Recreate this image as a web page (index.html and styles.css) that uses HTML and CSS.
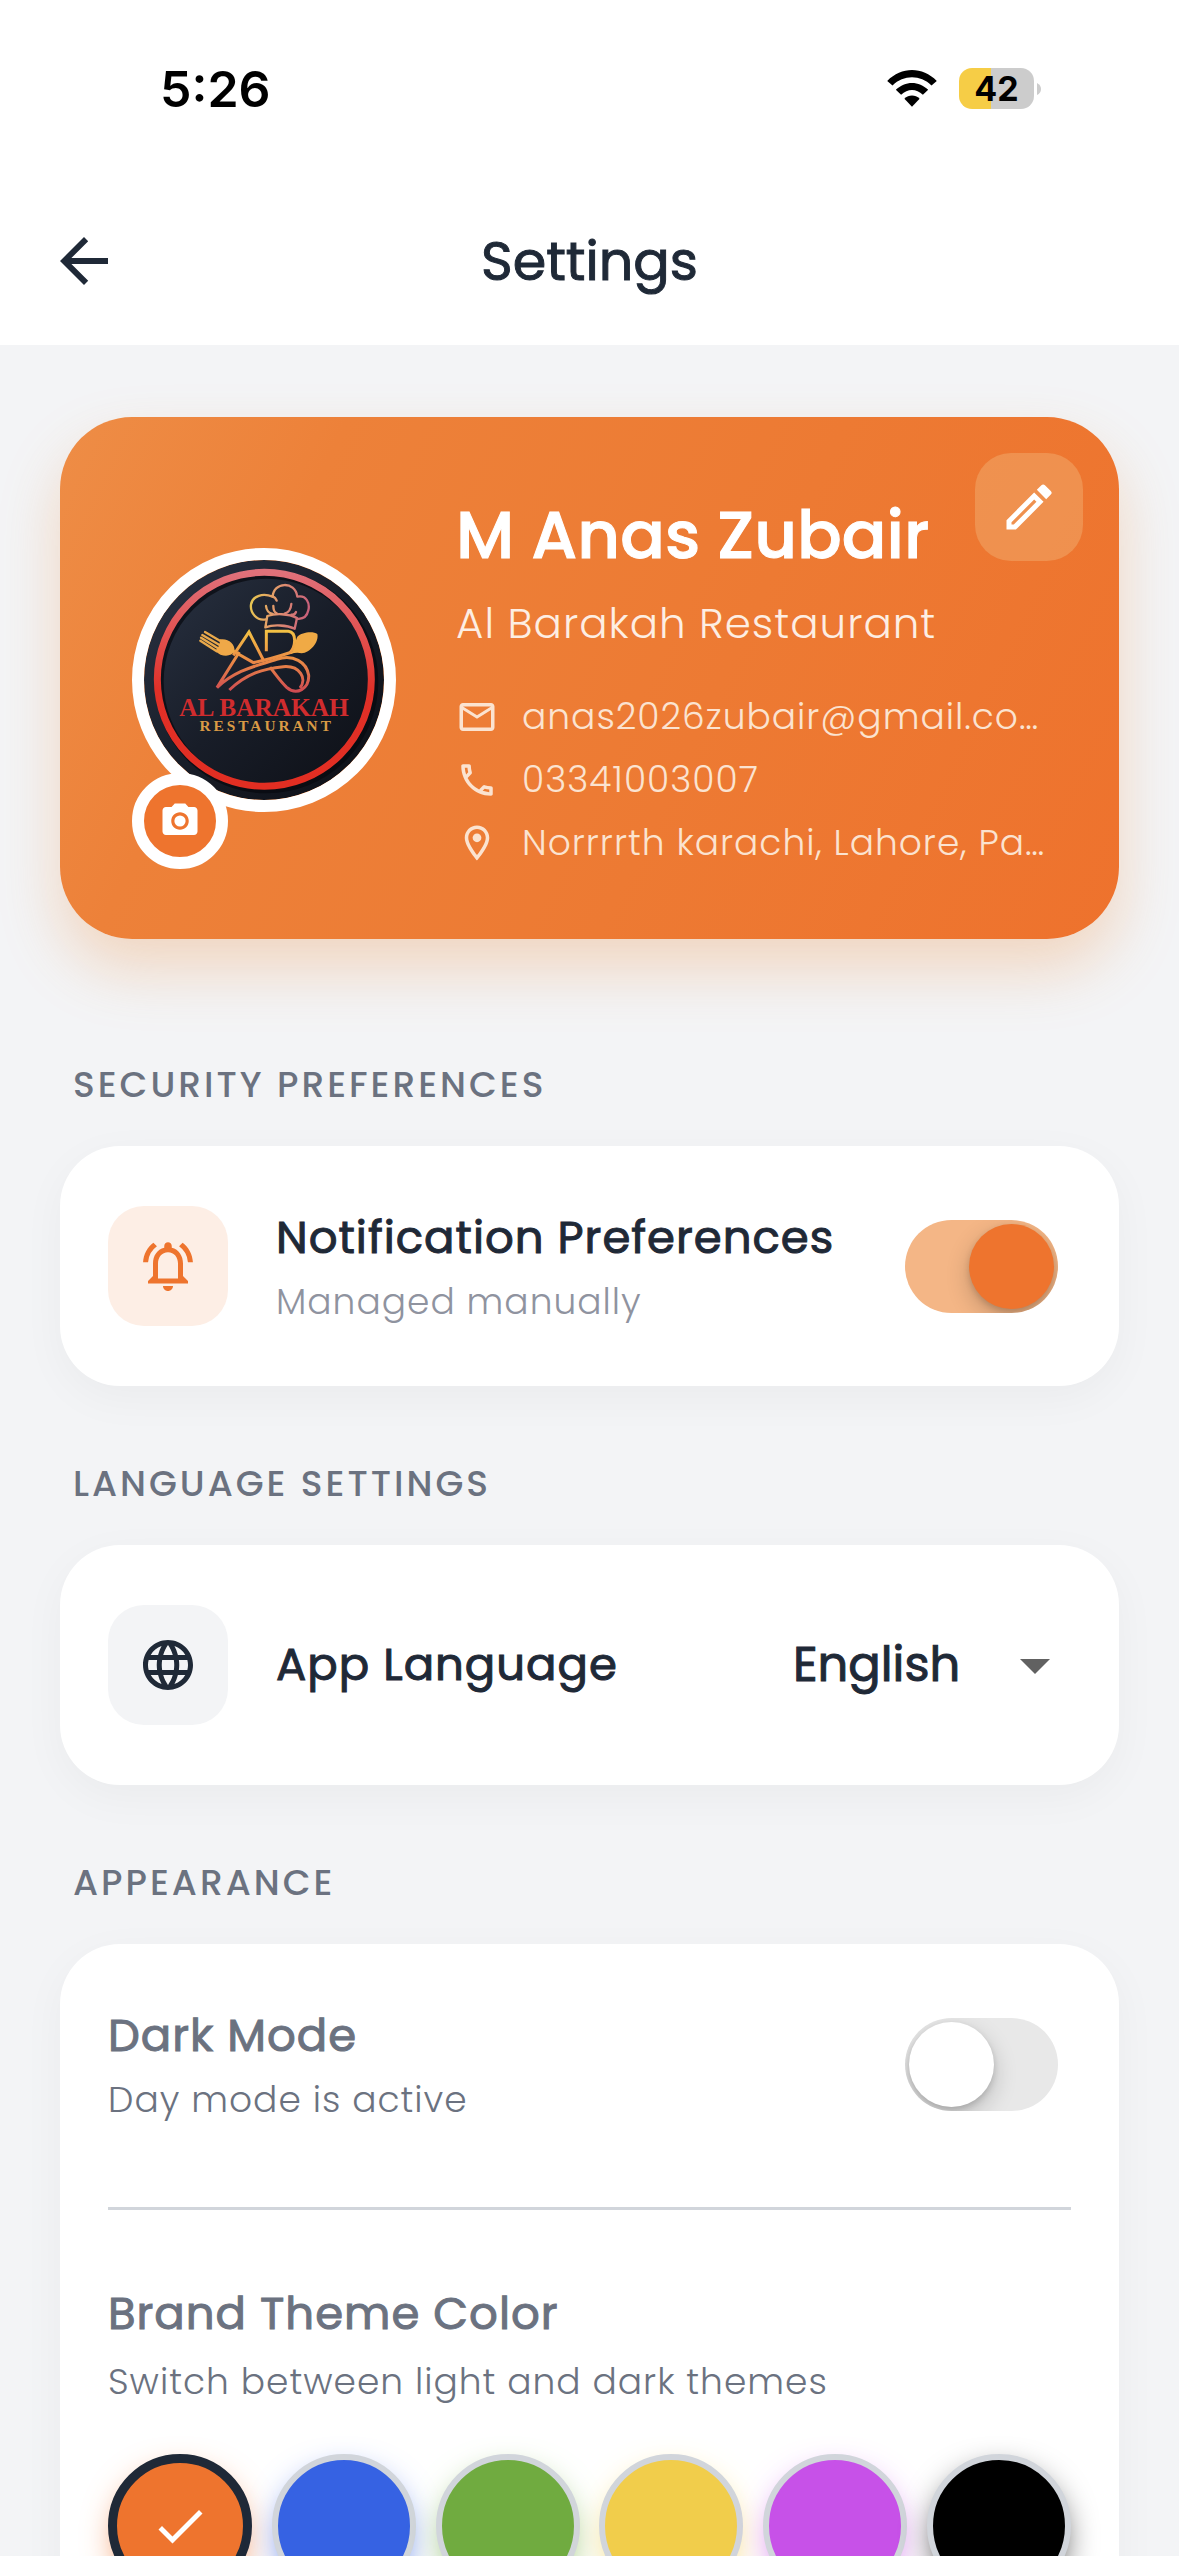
FILE: index.html
```html
<!DOCTYPE html>
<html lang="en">
<head>
<meta charset="utf-8">
<meta name="viewport" content="width=device-width, initial-scale=1">
<title>Settings</title>
<link rel="stylesheet" href="styles.css">
</head>
<body>
<div class="app">
  <div class="status-bar">
    <span class="clock">5:26</span>
    <div class="indicators">
      <svg class="wifi" viewBox="0 0 150 112" aria-hidden="true">
        <path d="M0 33C43-11 107-11 150 33L134 47C100 14 50 14 16 47Z"/>
        <path d="M26 60C54 32 96 32 124 60L108 75C88 56 62 56 42 75Z"/>
        <path d="M52 87C65 74 85 74 98 87L75 111Z"/>
      </svg>
      <div class="battery">
        <span class="battery-level">42</span>
        <svg class="battery-tip" viewBox="0 0 4 12" aria-hidden="true"><path d="M0 0Q4 2 4 6T0 12Z"/></svg>
      </div>
    </div>
  </div>

  <header class="top-bar">
    <button class="back" type="button" aria-label="Back">
      <svg viewBox="0 0 24 24"><path d="M20 11H7.8l5.600-5.600L12 4l-8 8 8 8 1.400-1.400L7.800 13H20z"/></svg>
    </button>
    <h1 class="title">Settings</h1>
  </header>

  <main class="content">
    <section class="profile">
      <div class="avatar">
        <svg class="logo" viewBox="72 84 720 720" role="img" aria-label="Al Barakah Restaurant logo">
          <defs>
            <linearGradient id="night" x1="0" y1="0" x2="1" y2="1">
              <stop offset="0" stop-color="#2b3445"/>
              <stop offset=".5" stop-color="#181d28"/>
              <stop offset="1" stop-color="#0c0e14"/>
            </linearGradient>
            <linearGradient id="ring" x1="0" y1="0" x2="0" y2="1">
              <stop offset="0" stop-color="#e0717a"/>
              <stop offset=".3" stop-color="#e2504f"/>
              <stop offset=".55" stop-color="#e03028"/>
              <stop offset="1" stop-color="#e22e22"/>
            </linearGradient>
            <linearGradient id="hat" gradientUnits="userSpaceOnUse" x1="390" y1="200" x2="566" y2="230">
              <stop offset="0" stop-color="#e8c850"/>
              <stop offset=".5" stop-color="#e09070"/>
              <stop offset="1" stop-color="#c8607a"/>
            </linearGradient>
            <linearGradient id="mono" gradientUnits="userSpaceOnUse" x1="0" y1="295" x2="0" y2="480">
              <stop offset="0" stop-color="#f2c244"/>
              <stop offset=".45" stop-color="#ec8f45"/>
              <stop offset="1" stop-color="#cf4a52"/>
            </linearGradient>
          </defs>
          <circle cx="432" cy="444" r="360" fill="url(#night)"/>
          <circle cx="440" cy="449" r="322" fill="none" stroke="#07090e" stroke-opacity=".7" stroke-width="26"/>
          <circle cx="433" cy="442" r="321" fill="none" stroke="url(#ring)" stroke-width="21"/>
          <g fill="none" stroke="url(#hat)" stroke-width="7" stroke-linejoin="round" stroke-linecap="round">
            <path d="M438 262C410 268 390 242 393 218C397 190 430 183 458 194C460 150 525 145 532 194C560 188 570 215 565 235C560 258 545 262 530 260"/>
            <path d="M442 252L436 286C460 277 500 279 524 290L531 258C505 244 465 244 442 252Z"/>
            <path d="M438 222Q440 242 458 246M458 194Q466 196 470 206M494 245Q512 240 514 216M460 222Q460 240 470 244M528 240Q524 250 514 248"/>
          </g>
          <g fill="none" stroke="url(#mono)" stroke-width="9">
            <path d="M439 358V298H505Q524 300 524 326Q523 350 510 362"/>
            <path d="M340 370L387 300L430 384"/>
            <path d="M358 360L291 467C350 410 420 400 470 382C520 366 560 390 566 430C568 470 530 492 500 466C478 445 466 425 450 406"/>
            <path d="M328 474C380 425 430 410 490 404C540 400 562 440 540 468"/>
            <path d="M334 354L400 392C440 384 480 372 516 360"/>
          </g>
          <g fill="none" stroke="#e9a94b" stroke-width="7" stroke-linecap="round">
            <path d="M255 300L306 330M247 309L300 340M243 317L294 349M241 326L290 358"/>
          </g>
          <path d="M300 322C325 318 345 335 344 358C335 374 305 378 286 356Q300 345 300 322Z" fill="#efa848"/>
          <path d="M512 366C526 350 524 330 532 314C545 300 580 296 592 306C598 330 570 362 545 364Q530 360 512 366Z" fill="#f0aa45"/>
          <g text-anchor="middle" class="logo-text">
            <text x="432" y="552" font-size="76" fill="#d02c2e">AL BARAKAH</text>
            <text class="logo-tag" x="440" y="597" font-size="46" fill="#d99a45">RESTAURANT</text>
          </g>
        </svg>
        <button class="camera" type="button" aria-label="Change photo">
          <svg viewBox="0 0 24 24"><circle cx="12" cy="12" r="3.200"/><path d="M9 2 7.170 4H4c-1.100 0-2 .9-2 2v12c0 1.100.9 2 2 2h16c1.100 0 2-.9 2-2V6c0-1.100-.9-2-2-2h-3.170L15 2H9zm3 15c-2.760 0-5-2.240-5-5s2.240-5 5-5 5 2.240 5 5-2.240 5-5 5z"/></svg>
        </button>
      </div>
      <div class="profile-info">
        <h2 class="name">M Anas Zubair</h2>
        <p class="business">Al Barakah Restaurant</p>
        <ul class="contacts">
          <li>
            <svg viewBox="0 0 24 24"><path d="M22 6c0-1.100-.9-2-2-2H4c-1.100 0-2 .9-2 2v12c0 1.100.9 2 2 2h16c1.100 0 2-.9 2-2V6zm-2 0-8 5-8-5h16zm0 12H4V8l8 5 8-5v10z"/></svg>
            <span>anas2026zubair@gmail.co…</span>
          </li>
          <li>
            <svg viewBox="0 0 24 24"><path d="M6.540 5c.06.89.21 1.760.45 2.590l-1.200 1.200c-.41-1.200-.67-2.470-.76-3.790h1.510m9.860 12.020c.85.24 1.720.39 2.600.45v1.490c-1.320-.09-2.590-.35-3.800-.75l1.200-1.190M7.500 3H4c-.55 0-1 .45-1 1 0 9.390 7.610 17 17 17 .55 0 1-.45 1-1v-3.490c0-.55-.45-1-1-1-1.240 0-2.450-.2-3.570-.57a.84.84 0 0 0-.31-.05c-.26 0-.51.1-.71.29l-2.200 2.200a15.150 15.150 0 0 1-6.590-6.590l2.200-2.200c.28-.28.36-.67.25-1.020A11.360 11.360 0 0 1 8.500 4c0-.55-.45-1-1-1z"/></svg>
            <span>03341003007</span>
          </li>
          <li>
            <svg viewBox="0 0 24 24"><path d="M12 2C8.130 2 5 5.130 5 9c0 5.250 7 13 7 13s7-7.750 7-13c0-3.870-3.130-7-7-7zM7 9c0-2.760 2.240-5 5-5s5 2.240 5 5c0 2.880-2.880 7.190-5 9.880C9.920 16.210 7 11.850 7 9z"/><circle cx="12" cy="9" r="2.500"/></svg>
            <span>Norrrrth karachi, Lahore, Pa…</span>
          </li>
        </ul>
      </div>
      <button class="edit" type="button" aria-label="Edit profile">
        <svg viewBox="0 0 24 24"><path d="m14.060 9.020.92.92L5.920 19H5v-.92l9.060-9.060M17.660 3c-.25 0-.51.1-.7.290l-1.830 1.830 3.750 3.750 1.830-1.830a.996.996 0 0 0 0-1.410l-2.340-2.340c-.2-.2-.45-.29-.71-.29zm-3.600 3.190L3 17.250V21h3.750L17.810 9.940l-3.750-3.750z"/></svg>
      </button>
    </section>

    <section class="group">
      <h2 class="group-label">SECURITY PREFERENCES</h2>
      <div class="card">
        <div class="row">
          <span class="tile tile-brand">
            <svg viewBox="0 0 24 24"><path d="M12 22c1.100 0 2-.9 2-2h-4c0 1.100.9 2 2 2zm6-6v-5c0-3.070-1.630-5.640-4.500-6.320V4c0-.83-.67-1.500-1.500-1.500s-1.500.67-1.500 1.500v.68C7.640 5.360 6 7.920 6 11v5l-2 2v1h16v-1l-2-2zm-2 1H8v-6c0-2.480 1.510-4.500 4-4.500s4 2.020 4 4.500v6zM7.580 4.080 6.150 2.650C3.750 4.480 2.170 7.300 2.030 10.500h2a8.445 8.445 0 0 1 3.550-6.420zm12.390 6.420h2c-.15-3.200-1.730-6.020-4.120-7.850l-1.420 1.430a8.495 8.495 0 0 1 3.540 6.420z"/></svg>
          </span>
          <label class="row-text" for="notifications">
            <span class="row-title">Notification Preferences</span>
            <span class="row-note faint">Managed manually</span>
          </label>
          <input class="switch" type="checkbox" role="switch" id="notifications" checked>
        </div>
      </div>
    </section>

    <section class="group">
      <h2 class="group-label">LANGUAGE SETTINGS</h2>
      <div class="card">
        <div class="row">
          <span class="tile">
            <svg viewBox="0 0 24 24"><path d="M11.990 2C6.470 2 2 6.480 2 12s4.470 10 9.990 10C17.520 22 22 17.520 22 12S17.520 2 11.990 2zm6.930 6h-2.950a15.650 15.650 0 0 0-1.380-3.560A8.030 8.030 0 0 1 18.920 8zM12 4.040c.83 1.200 1.480 2.530 1.910 3.960h-3.820c.43-1.430 1.080-2.760 1.910-3.960zM4.260 14C4.100 13.360 4 12.690 4 12s.1-1.360.26-2h3.380c-.08.66-.14 1.320-.14 2s.06 1.340.14 2H4.260zm.82 2h2.950c.32 1.250.78 2.450 1.380 3.560A7.987 7.987 0 0 1 5.080 16zm2.950-8H5.080a7.987 7.987 0 0 1 4.330-3.560A15.650 15.650 0 0 0 8.030 8zM12 19.960c-.83-1.200-1.480-2.530-1.910-3.960h3.820c-.43 1.430-1.080 2.760-1.910 3.960zM14.340 14H9.660c-.09-.66-.16-1.320-.16-2s.07-1.350.16-2h4.680c.09.65.16 1.320.16 2s-.07 1.340-.16 2zm.25 5.560c.6-1.110 1.060-2.310 1.380-3.560h2.950a8.030 8.030 0 0 1-4.330 3.560zM16.360 14c.08-.66.14-1.320.14-2s-.06-1.340-.14-2h3.380c.16.64.26 1.310.26 2s-.1 1.360-.26 2h-3.380z"/></svg>
          </span>
          <label class="row-text" for="language"><span class="row-title">App Language</span></label>
          <div class="picker">
            <select id="language"><option>English</option></select>
            <svg viewBox="0 0 24 24" aria-hidden="true"><path d="m7 10 5 5 5-5z"/></svg>
          </div>
        </div>
      </div>
    </section>

    <section class="group">
      <h2 class="group-label">APPEARANCE</h2>
      <div class="card">
        <div class="row">
          <label class="row-text" for="dark-mode">
            <span class="row-title muted">Dark Mode</span>
            <span class="row-note">Day mode is active</span>
          </label>
          <input class="switch" type="checkbox" role="switch" id="dark-mode">
        </div>
        <hr class="divider">
        <h3 class="row-title muted">Brand Theme Color</h3>
        <p class="row-note theme-note">Switch between light and dark themes</p>
        <div class="swatches">
          <label class="swatch orange"><input type="radio" name="theme" aria-label="Orange" checked><svg viewBox="0 0 24 24" aria-hidden="true"><path d="M9 16.200 4.800 12l-1.400 1.400L9 19 21 7l-1.400-1.400z"/></svg></label>
          <label class="swatch blue"><input type="radio" name="theme" aria-label="Blue"></label>
          <label class="swatch green"><input type="radio" name="theme" aria-label="Green"></label>
          <label class="swatch yellow"><input type="radio" name="theme" aria-label="Yellow"></label>
          <label class="swatch purple"><input type="radio" name="theme" aria-label="Purple"></label>
          <label class="swatch black"><input type="radio" name="theme" aria-label="Black"></label>
        </div>
      </div>
    </section>
  </main>
</div>
</body>
</html>
```
FILE: styles.css
```css
:root {
  --brand: #ee742e;
  --ink: #1f2937;
  --muted: #6b7280;
  --line: #d1d5db;
  --page: #f3f4f6;
}

* { box-sizing: border-box; }

body {
  margin: 0;
  background: var(--page);
  color: var(--ink);
  font-family: Poppins, Inter, "Open Sans", sans-serif;
}

h1, h2, h3, p, ul { margin: 0; padding: 0; }
ul { list-style: none; }
svg { display: block; fill: currentColor; }

button {
  display: grid;
  place-items: center;
  padding: 0;
  border: 0;
  background: none;
  color: inherit;
}

.app {
  display: flex;
  flex-direction: column;
  height: 100vh;
}

/* Status bar */
.status-bar {
  display: flex;
  flex: none;
  align-items: center;
  justify-content: space-between;
  height: 177px;
  padding: 0 138px 0 160px;
  background: #fff;
  color: #000;
  font-family: Inter, sans-serif;
}
.clock { font-size: 50px; font-weight: 600; line-height: 60px; }
.indicators { display: flex; align-items: center; gap: 22px; }
.wifi { width: 50px; height: 37px; }
.battery { display: flex; align-items: center; gap: 3px; }
.battery-level {
  width: 75px;
  border-radius: 13px;
  background: linear-gradient(90deg, #f6cd46 43%, #ccc 43%);
  font-size: 34px;
  font-weight: 700;
  line-height: 41px;
  text-align: center;
}
.battery-tip { width: 4px; height: 12px; color: #ccc; }

/* Title bar */
.top-bar {
  display: grid;
  flex: none;
  grid-template-columns: 72px 1fr 72px;
  align-items: center;
  height: 168px;
  padding: 0 48px;
  background: #fff;
}
.back svg { width: 72px; height: 72px; }
.title {
  font-size: 54px;
  font-weight: 400;
  line-height: 72px;
  text-align: center;
  -webkit-text-stroke: 1px;
}

.content {
  flex: 1;
  min-height: 0;
  padding: 72px 60px;
  overflow-y: auto;
  scrollbar-width: none;
}

/* Profile */
.profile {
  position: relative;
  display: flex;
  align-items: center;
  gap: 60px;
  margin-bottom: 48px;
  padding: 72px 60px 69px 72px;
  border-radius: 72px;
  background: linear-gradient(116deg, #ee8d46, #ed8139 22%, #ed7a33 60%, #ee722d);
  box-shadow: 0 30px 60px rgba(238, 135, 55, .28);
  color: #fff;
}
.avatar {
  position: relative;
  flex: none;
  width: 264px;
  height: 264px;
  border: 12px solid #fff;
  border-radius: 50%;
}
.logo { border-radius: 50%; }
.logo-text { font-family: "Liberation Serif", serif; font-weight: 700; }
.logo-tag { letter-spacing: 9px; }
.camera {
  position: absolute;
  left: -12px;
  bottom: -69px;
  width: 96px;
  height: 96px;
  border: 12px solid #fff;
  border-radius: 50%;
  background: var(--brand);
}
.camera svg { width: 42px; height: 42px; }
.profile-info { flex: 1; min-width: 0; }
.name {
  font-size: 66px;
  font-weight: 500;
  line-height: 93px;
  -webkit-text-stroke: 1px;
}
.business {
  margin-top: 12px;
  color: #fdeee3;
  font-size: 42px;
  font-weight: 300;
  line-height: 60px;
  letter-spacing: 1px;
}
.contacts {
  display: grid;
  gap: 9px;
  margin-top: 36px;
  color: #fbe3d0;
  font-size: 36px;
  font-weight: 300;
  line-height: 54px;
  letter-spacing: 1px;
}
.contacts li { display: flex; align-items: center; gap: 24px; }
.contacts svg { flex: none; width: 42px; height: 42px; }
.contacts span { overflow: hidden; text-overflow: ellipsis; white-space: nowrap; }
.edit {
  position: absolute;
  top: 36px;
  right: 36px;
  width: 108px;
  height: 108px;
  border-radius: 36px;
  background: rgba(242, 172, 110, .5);
}
.edit svg { width: 60px; height: 60px; }

/* Setting groups */
.group { padding-top: 71px; }
.group-label {
  margin-bottom: 34px;
  padding-left: 13px;
  color: var(--muted);
  font-size: 36px;
  font-weight: 500;
  line-height: 54px;
  letter-spacing: 3px;
}
.card {
  padding: 48px;
  border-radius: 60px;
  background: #fff;
  box-shadow: 0 12px 45px rgba(0, 0, 0, .04);
}

.row { display: flex; align-items: center; gap: 48px; min-height: 144px; }
.tile {
  display: grid;
  flex: none;
  place-items: center;
  width: 120px;
  height: 120px;
  border-radius: 36px;
  background: var(--page);
}
.tile svg { width: 60px; height: 60px; }
.tile-brand { background: #fdeee5; color: var(--brand); }
.row-text { display: grid; flex: 1; min-width: 0; }
.row-title {
  font-size: 45px;
  font-weight: 400;
  line-height: 72px;
  letter-spacing: 1px;
  -webkit-text-stroke: 1px;
}
.row-note {
  color: var(--muted);
  font-size: 36px;
  font-weight: 300;
  line-height: 56px;
  letter-spacing: 1px;
}
.faint { color: #8f939f; }
.muted { color: var(--muted); }

.switch {
  flex: none;
  appearance: none;
  width: 153px;
  height: 93px;
  margin: 0 13px 0 0;
  padding: 4px;
  border-radius: 48px;
  background: #e8e8e8;
  overflow: hidden;
}
.switch::before {
  display: block;
  width: 85px;
  height: 85px;
  border-radius: 50%;
  background: #fff;
  box-shadow: 0 9px 24px rgba(0, 0, 0, .2), 0 3px 6px rgba(0, 0, 0, .15);
  content: "";
}
.switch:checked { background: #f4b686; }
.switch:checked::before { margin-left: auto; background: var(--brand); }

.picker { display: grid; width: 278px; align-items: center; }
.picker select,
.picker svg { grid-area: 1 / 1; }
.picker select {
  appearance: none;
  width: 100%;
  padding: 0 72px 0 0;
  border: 0;
  background: none;
  color: inherit;
  font: 400 48px/72px Poppins, Inter, "Open Sans", sans-serif;
  -webkit-text-stroke: 1px;
}
.picker svg {
  justify-self: end;
  width: 72px;
  height: 72px;
  color: #616161;
  pointer-events: none;
}

.divider {
  height: 3px;
  margin: 71px 0 68px;
  border: 0;
  background: var(--line);
}
.theme-note { margin-top: 4px; }

.swatches { display: flex; justify-content: space-between; margin-top: 44px; }
.swatch { display: grid; place-items: center; }
.swatch input,
.swatch svg { grid-area: 1 / 1; }
.swatch input {
  appearance: none;
  width: 144px;
  height: 144px;
  margin: 0;
  border: 6px solid var(--line);
  border-radius: 50%;
  background: currentColor;
  box-shadow: 0 12px 36px -12px currentColor;
  color: inherit;
}
.swatch input:checked { border: 9px solid var(--ink); }
.swatch svg { width: 60px; height: 60px; color: #fff; pointer-events: none; }
.orange { color: #ee742e; }
.blue { color: #3662e3; }
.green { color: #70ab40; }
.yellow { color: #f1cd4b; }
.purple { color: #c751e8; }
.black { color: #000; }
```
